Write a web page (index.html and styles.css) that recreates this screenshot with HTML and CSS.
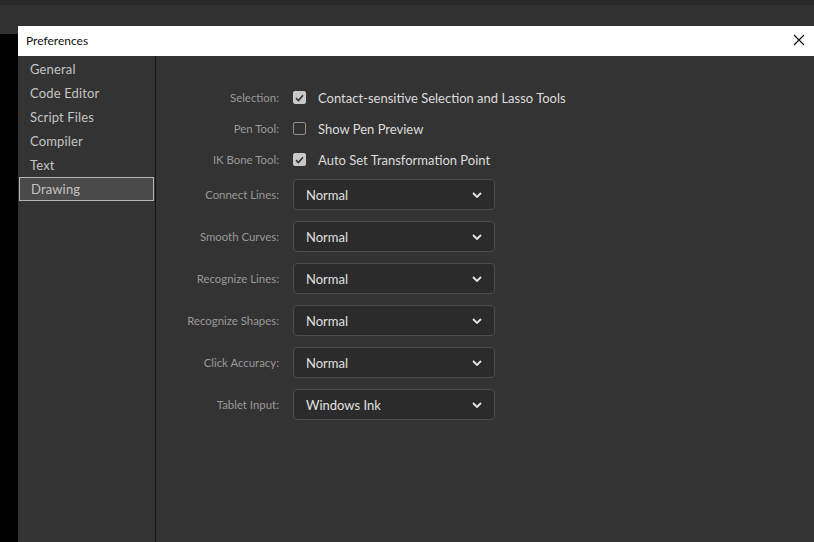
FILE: index.html
```html
<!DOCTYPE html>
<html>
<head>
<meta charset="utf-8">
<link rel="stylesheet" href="styles.css">
<title>Preferences</title>
</head>
<body>
<div class="desktop">
  <div class="app-top"></div>
  <div class="app-black"></div>
</div>
<div class="dialog">
  <div class="titlebar">
    <span class="title">Preferences</span>
    <svg class="close" width="12" height="12" viewBox="0 0 12 12"><path d="M1 1L11 11M11 1L1 11" stroke="#111" stroke-width="1.2" fill="none"/></svg>
  </div>
  <div class="body">
    <ul class="sidebar">
      <li>General</li>
      <li>Code Editor</li>
      <li>Script Files</li>
      <li>Compiler</li>
      <li>Text</li>
      <li class="active">Drawing</li>
    </ul>
    <div class="content">
      <div class="form">
        <div class="label check-row">Selection:</div>
        <div class="control check-row"><span class="box checked"><svg width="9" height="8" viewBox="0 0 9 8"><path d="M1 4.2L3.4 6.5L8 1.3" stroke="#333" stroke-width="1.6" fill="none"/></svg></span><span class="check-text">Contact-sensitive Selection and Lasso Tools</span></div>

        <div class="label check-row">Pen Tool:</div>
        <div class="control check-row"><span class="box"></span><span class="check-text">Show Pen Preview</span></div>

        <div class="label check-row">IK Bone Tool:</div>
        <div class="control check-row"><span class="box checked"><svg width="9" height="8" viewBox="0 0 9 8"><path d="M1 4.2L3.4 6.5L8 1.3" stroke="#333" stroke-width="1.6" fill="none"/></svg></span><span class="check-text">Auto Set Transformation Point</span></div>

        <div class="label drop-row first">Connect Lines:</div>
        <div class="control drop-row first"><div class="select"><span>Normal</span><svg width="10" height="6" viewBox="0 0 10 6"><path d="M1 1L5 5L9 1" stroke="#e6e6e6" stroke-width="1.8" fill="none"/></svg></div></div>

        <div class="label drop-row">Smooth Curves:</div>
        <div class="control drop-row"><div class="select"><span>Normal</span><svg width="10" height="6" viewBox="0 0 10 6"><path d="M1 1L5 5L9 1" stroke="#e6e6e6" stroke-width="1.8" fill="none"/></svg></div></div>

        <div class="label drop-row">Recognize Lines:</div>
        <div class="control drop-row"><div class="select"><span>Normal</span><svg width="10" height="6" viewBox="0 0 10 6"><path d="M1 1L5 5L9 1" stroke="#e6e6e6" stroke-width="1.8" fill="none"/></svg></div></div>

        <div class="label drop-row">Recognize Shapes:</div>
        <div class="control drop-row"><div class="select"><span>Normal</span><svg width="10" height="6" viewBox="0 0 10 6"><path d="M1 1L5 5L9 1" stroke="#e6e6e6" stroke-width="1.8" fill="none"/></svg></div></div>

        <div class="label drop-row">Click Accuracy:</div>
        <div class="control drop-row"><div class="select"><span>Normal</span><svg width="10" height="6" viewBox="0 0 10 6"><path d="M1 1L5 5L9 1" stroke="#e6e6e6" stroke-width="1.8" fill="none"/></svg></div></div>

        <div class="label drop-row">Tablet Input:</div>
        <div class="control drop-row"><div class="select"><span>Windows Ink</span><svg width="10" height="6" viewBox="0 0 10 6"><path d="M1 1L5 5L9 1" stroke="#e6e6e6" stroke-width="1.8" fill="none"/></svg></div></div>
      </div>
    </div>
  </div>
</div>
</body>
</html>
```
FILE: styles.css
```css
html, body {
  margin: 0;
  padding: 0;
  width: 814px;
  height: 542px;
  overflow: hidden;
  font-family: Lato, "Noto Sans", sans-serif;
}
body {
  position: relative;
  background: #000;
}
.desktop {
  display: flex;
  flex-direction: column;
  height: 100%;
}
.app-top {
  height: 34px;
  background: linear-gradient(#2a2a2a 0, #2a2a2a 5px, #313131 5px);
}
.app-black {
  flex: 1;
  background: #000;
}
.dialog {
  position: absolute;
  left: 18px;
  top: 26px;
  right: 0;
  bottom: 0;
  display: flex;
  flex-direction: column;
  background: #333;
}
.titlebar {
  height: 30px;
  background: #fff;
  display: flex;
  align-items: center;
  justify-content: space-between;
  padding: 0 10px 2px 8px;
  box-sizing: border-box;
  flex: none;
}
.title {
  font-size: 12px;
  color: #111;
}
.close {
  display: block;
  position: relative;
  left: 1px;
}
.body {
  flex: 1;
  display: flex;
}
.sidebar {
  list-style: none;
  margin: 0;
  padding: 1px 0 0 0;
  width: 137px;
  border-right: 1px solid #141414;
  background: #333;
}
.sidebar li {
  height: 24px;
  line-height: 24px;
  padding-left: 12px;
  font-size: 13px;
  letter-spacing: 0.15px;
  color: #c4c4c4;
  box-sizing: border-box;
}
.sidebar li.active {
  background: #4a4a4a;
  border: 1px solid #b4b4b4;
  line-height: 22px;
  padding-left: 11px;
  margin-left: 1px;
  margin-right: 1px;
}
.content {
  flex: 1;
  padding-top: 26px;
}
.form {
  display: grid;
  grid-template-columns: 123px 1fr;
  column-gap: 14px;
}
.label {
  font-size: 11.4px;
  color: #999;
  text-align: right;
  display: flex;
  align-items: center;
  justify-content: flex-end;
}
.control {
  display: flex;
  align-items: center;
}
.check-row {
  height: 31px;
}
.drop-row {
  height: 31px;
  margin-top: 11px;
}
.drop-row.first {
  margin-top: 4px;
}
.box {
  width: 13px;
  height: 13px;
  box-sizing: border-box;
  border: 1.5px solid #8e8e8e;
  border-radius: 2px;
  display: flex;
  align-items: center;
  justify-content: center;
  flex: none;
}
.box.checked {
  background: #c8c8c8;
  border-color: #c8c8c8;
}
.box svg {
  display: block;
}
.check-text {
  margin-left: 12px;
  font-size: 13px;
  color: #dcdcdc;
}
.select {
  width: 202px;
  height: 31px;
  box-sizing: border-box;
  border: 1px solid #4b4b4b;
  border-radius: 4px;
  background: #2b2b2b;
  display: flex;
  align-items: center;
  justify-content: space-between;
  padding: 0 12px 0 12px;
  font-size: 13px;
  color: #e0e0e0;
}
.select svg {
  display: block;
}
```
